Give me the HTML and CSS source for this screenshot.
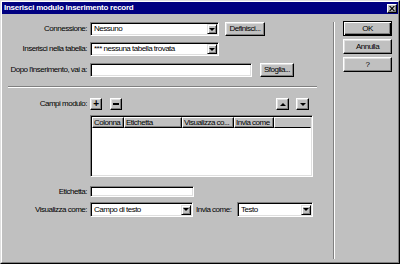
FILE: index.html
```html
<!DOCTYPE html>
<html lang="it">
<head>
<meta charset="utf-8">
<title>Inserisci modulo inserimento record</title>
<link rel="stylesheet" href="styles.css">
</head>
<body>
<div class="dialog">
  <div class="frame">
    <div class="titlebar">
      <span class="title">Inserisci modulo inserimento record</span>
      <span class="close"><svg width="6" height="5" viewBox="0 0 6 5"><path d="M0 0L1.5 0L3 1.8L4.5 0L6 0L3.8 2.5L6 5L4.5 5L3 3.2L1.5 5L0 5L2.2 2.5Z" fill="#000"/></svg></span>
    </div>
    <div class="content">
      <div class="main">
        <div class="row r1">
          <span class="lbl">Connessione:</span>
          <div class="field select w-sel"><span class="val">Nessuno</span><span class="drop"><i class="tri-down"></i></span></div>
          <button class="btn b-defin">Definisci...</button>
        </div>
        <div class="row r2">
          <span class="lbl">Inserisci nella tabella:</span>
          <div class="field select w-sel"><span class="val">*** nessuna tabella trovata</span><span class="drop"><i class="tri-down"></i></span></div>
        </div>
        <div class="row r3">
          <span class="lbl">Dopo l'inserimento, vai a:</span>
          <div class="field w-dopo"></div>
          <button class="btn b-sfoglia">Sfoglia...</button>
        </div>
        <div class="hsep"></div>
        <div class="row r4">
          <span class="lbl">Campi modulo:</span>
          <button class="btn mini plus">+</button>
          <button class="btn mini minus"><i class="dash"></i></button>
          <button class="btn arrow up"><i class="tri-up"></i></button>
          <button class="btn arrow down"><i class="tri-down"></i></button>
        </div>
        <div class="listview">
          <div class="lv-head">
            <span class="hc c1">Colonna</span>
            <span class="hc c2">Etichetta</span>
            <span class="hc c3">Visualizza co...</span>
            <span class="hc c4">Invia come</span>
            <span class="hc c5"></span>
          </div>
        </div>
        <div class="row r5">
          <span class="lbl">Etichetta:</span>
          <div class="field w-etich"></div>
        </div>
        <div class="row r6">
          <span class="lbl">Visualizza come:</span>
          <div class="field select w-vis"><span class="val">Campo di testo</span><span class="drop"><i class="tri-down"></i></span></div>
          <span class="lbl2">Invia come:</span>
          <div class="field select w-invia"><span class="val">Testo</span><span class="drop"><i class="tri-down"></i></span></div>
        </div>
      </div>
      <div class="vsep"></div>
      <div class="side">
        <button class="btn big default">OK</button>
        <button class="btn big">Annulla</button>
        <button class="btn big">?</button>
      </div>
    </div>
  </div>
</div>
</body>
</html>
```

FILE: styles.css
```css
* { box-sizing: border-box; margin: 0; padding: 0; }
html, body { width: 400px; height: 264px; overflow: hidden; background: #c0c0c0; }
body {
  font-family: "Liberation Sans", Arial, sans-serif;
  font-size: 8px;
  letter-spacing: -0.5px;
  color: #000;
  line-height: 1;
}
.dialog {
  width: 400px; height: 264px;
  border: 1px solid; border-color: #dfdfdf #000 #000 #dfdfdf;
  background: #c0c0c0;
}
.frame {
  height: 100%;
  border: 1px solid; border-color: #fff #808080 #808080 #fff;
  display: flex; flex-direction: column;
}
.titlebar {
  height: 12px; flex: none;
  background: #000080; color: #fff;
  display: flex; align-items: center; justify-content: space-between;
  padding: 0 1px 0 2px;
}
.title { font-weight: bold; font-size: 8px; letter-spacing: -0.25px; white-space: nowrap; }
.close {
  width: 10px; height: 9px;
  background: #c0c0c0;
  border: 1px solid; border-color: #fff #000 #000 #fff;
  box-shadow: inset -1px -1px #808080;
  display: flex; align-items: center; justify-content: center;
}
.close svg { display: block; }

.content { flex: 1; display: flex; }
.main {
  width: 331px; flex: none;
  padding: 8px 16px 0 6px;
  display: flex; flex-direction: column;
}
.row { display: flex; align-items: center; flex: none; }
.lbl { width: 79px; margin-right: 3px; text-align: right; white-space: nowrap; flex: none; }

.field {
  background: #fff;
  border: 1px solid; border-color: #808080 #fff #fff #808080;
  box-shadow: inset 1px 1px #000, inset -1px -1px #dfdfdf;
  height: 14px;
  display: flex; align-items: center;
  padding: 1px 1px 1px 3px;
  flex: none;
}
.val { white-space: nowrap; flex: 1; overflow: hidden; }
.drop {
  width: 10px; height: 10px; flex: none;
  background: #c0c0c0;
  border: 1px solid; border-color: #dfdfdf #000 #000 #dfdfdf;
  box-shadow: inset 1px 1px #fff, inset -1px -1px #808080;
  display: flex; align-items: center; justify-content: center;
}
.tri-down { display: block; width: 0; height: 0; border-left: 3px solid transparent; border-right: 3px solid transparent; border-top: 3px solid #000; }
.tri-up { display: block; width: 0; height: 0; border-left: 3px solid transparent; border-right: 3px solid transparent; border-bottom: 3px solid #000; }

.btn {
  font: inherit; color: #000; letter-spacing: inherit;
  background: #c0c0c0;
  border: 1px solid; border-color: #fff #000 #000 #fff;
  box-shadow: inset -1px -1px #808080, inset 1px 1px #dfdfdf;
  display: flex; align-items: center; justify-content: center;
  flex: none;
}

.r1 { height: 14px; }
.w-sel { width: 129px; }
.b-defin { width: 40px; height: 14px; margin-left: 6px; }
.r2 { height: 14px; margin-top: 6px; }
.r3 { height: 14px; margin-top: 7px; }
.w-dopo { width: 162px; }
.b-sfoglia { width: 34px; height: 14px; margin-left: 8px; }
.hsep { height: 2px; margin-top: 9px; border-top: 1px solid #808080; border-bottom: 1px solid #fff; flex: none; }

.r4 { height: 12px; margin-top: 10px; }
.mini { width: 12px; height: 12px; font-weight: bold; font-size: 10px; }
.plus { margin-right: 8px; }
.dash { display: block; width: 6px; height: 2px; background: #000; }
.arrow { width: 13px; height: 12px; }
.up { margin-left: auto; margin-right: 7px; }
.down { margin-right: 8px; }

.listview {
  width: 223px; height: 62px; margin: 5px 0 0 82px; flex: none;
  background: #fff;
  border: 1px solid; border-color: #808080 #fff #fff #808080;
  box-shadow: inset 1px 1px #000, inset -1px -1px #dfdfdf;
  padding: 1px;
}
.lv-head { display: flex; height: 11px; }
.hc {
  height: 11px; background: #c0c0c0;
  border: 1px solid; border-color: #fff #000 #000 #fff;
  box-shadow: inset -1px -1px #808080;
  padding: 0 1px; white-space: nowrap; overflow: hidden;
  display: flex; align-items: center;
  flex: none;
}
.c1 { width: 32px; }
.c2 { width: 58px; }
.c3 { width: 52px; }
.c4 { width: 40px; }
.c5 { flex: 1; border-right-color: #c0c0c0; box-shadow: none; }

.r5 { height: 11px; margin-top: 9px; }
.w-etich { width: 104px; height: 11px; }
.r6 { height: 15px; margin-top: 5px; }
.w-vis { width: 103px; height: 15px; }
.lbl2 { margin-left: 3px; white-space: nowrap; width: 37px; }
.w-invia { width: 76px; height: 15px; margin-left: 4px; }

.vsep {
  width: 2px; flex: none;
  margin: 8px 0 3px 0;
  border-left: 1px solid #808080; border-right: 1px solid #fff;
}
.side {
  flex: 1;
  padding: 7px 0 0 8px;
  display: flex; flex-direction: column; gap: 3px;
}
.big { width: 49px; height: 15px; }
.default {
  border-color: #000;
  box-shadow: inset 1px 1px #fff, inset -1px -1px #000, inset -2px -2px #808080;
}
```
